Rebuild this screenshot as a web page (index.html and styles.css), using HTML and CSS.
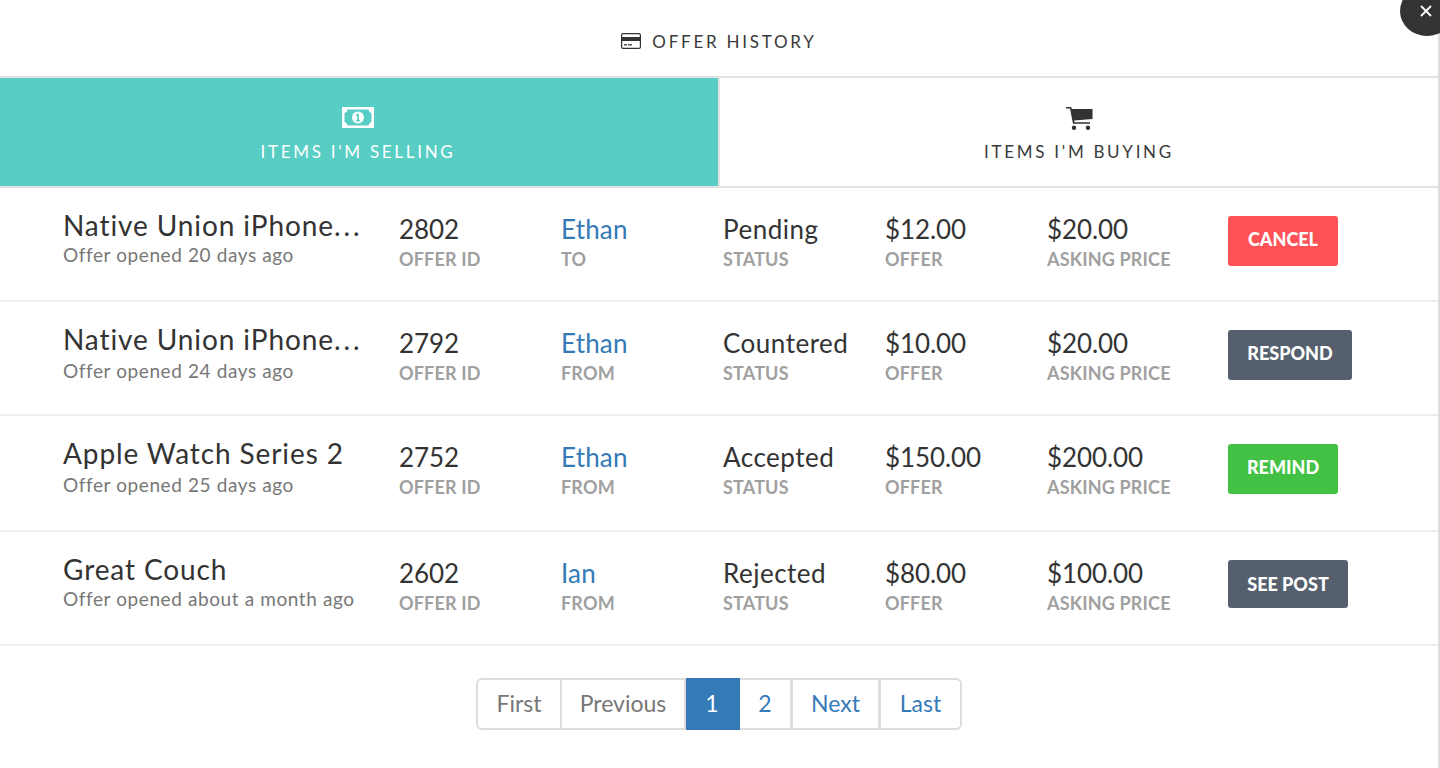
FILE: index.html
```html
<!DOCTYPE html>
<html lang="en">
<head>
<meta charset="utf-8">
<title>Offer History</title>
<link rel="stylesheet" href="styles.css">
</head>
<body>
<div class="modal">
  <header class="modal-head">
    <svg class="card-icon" viewBox="0 0 20 16" width="20" height="16"><rect x="0.6" y="0.6" width="18.800" height="14.800" rx="1.500" fill="none" stroke="#333" stroke-width="1.200"/><rect x="1" y="4" width="18" height="4" fill="#333"/><rect x="3" y="11" width="3" height="1.500" fill="#555"/><rect x="7" y="11" width="4" height="1.500" fill="#555"/></svg>
    <span>OFFER HISTORY</span>
  </header>
  <nav class="tabs">
    <div class="tab active">
      <svg viewBox="0 0 32 21" width="32" height="25"><path fill="#fff" fill-rule="evenodd" d="M0 0h32v21H0zM2.500 6v9a4 4 0 0 1 3 3.500h21a4 4 0 0 1 3-3.500V6a4 4 0 0 1-3-3.500h-21a4 4 0 0 1-3 3.500z"/><circle cx="16" cy="10.500" r="6" fill="#fff"/><path fill="#57cdc4" d="M15.300 6.800h1.600v6.500h1.200v1.100h-4.200v-1.100h1.300V8.300l-1.200.6-.4-1z"/></svg>
      <span>ITEMS I'M SELLING</span>
    </div>
    <div class="tab">
      <svg viewBox="0 -2 27 25" width="27" height="25"><path fill="#333" d="M0 0h5.200l.6 2H26.500v10L8.300 13.500l.3 1.700H24v1.600H7L4 1.500H0z"/><circle cx="8" cy="20.800" r="2.200" fill="#333"/><circle cx="22" cy="20.800" r="2.200" fill="#333"/></svg>
      <span>ITEMS I'M BUYING</span>
    </div>
  </nav>

  <section class="row row-a">
    <div class="item"><div class="title">Native Union iPhone<span class="dots">...</span></div><div class="sub">Offer opened 20 days ago</div></div>
    <div class="cell"><div class="val">2802</div><div class="lbl">OFFER ID</div></div>
    <div class="cell"><div class="val link">Ethan</div><div class="lbl">TO</div></div>
    <div class="cell"><div class="val word">Pending</div><div class="lbl">STATUS</div></div>
    <div class="cell"><div class="val">$12.00</div><div class="lbl">OFFER</div></div>
    <div class="cell"><div class="val">$20.00</div><div class="lbl">ASKING PRICE</div></div>
    <div class="action"><a class="btn red w110">CANCEL</a></div>
  </section>
  <section class="row row-b">
    <div class="item"><div class="title">Native Union iPhone<span class="dots">...</span></div><div class="sub">Offer opened 24 days ago</div></div>
    <div class="cell"><div class="val">2792</div><div class="lbl">OFFER ID</div></div>
    <div class="cell"><div class="val link">Ethan</div><div class="lbl">FROM</div></div>
    <div class="cell"><div class="val word">Countered</div><div class="lbl">STATUS</div></div>
    <div class="cell"><div class="val">$10.00</div><div class="lbl">OFFER</div></div>
    <div class="cell"><div class="val">$20.00</div><div class="lbl">ASKING PRICE</div></div>
    <div class="action"><a class="btn slate w124">RESPOND</a></div>
  </section>
  <section class="row row-c">
    <div class="item"><div class="title">Apple Watch Series 2</div><div class="sub">Offer opened 25 days ago</div></div>
    <div class="cell"><div class="val">2752</div><div class="lbl">OFFER ID</div></div>
    <div class="cell"><div class="val link">Ethan</div><div class="lbl">FROM</div></div>
    <div class="cell"><div class="val word">Accepted</div><div class="lbl">STATUS</div></div>
    <div class="cell"><div class="val">$150.00</div><div class="lbl">OFFER</div></div>
    <div class="cell"><div class="val">$200.00</div><div class="lbl">ASKING PRICE</div></div>
    <div class="action"><a class="btn green w110">REMIND</a></div>
  </section>
  <section class="row row-d">
    <div class="item"><div class="title">Great Couch</div><div class="sub">Offer opened about a month ago</div></div>
    <div class="cell"><div class="val">2602</div><div class="lbl">OFFER ID</div></div>
    <div class="cell"><div class="val link">Ian</div><div class="lbl">FROM</div></div>
    <div class="cell"><div class="val word">Rejected</div><div class="lbl">STATUS</div></div>
    <div class="cell"><div class="val">$80.00</div><div class="lbl">OFFER</div></div>
    <div class="cell"><div class="val">$100.00</div><div class="lbl">ASKING PRICE</div></div>
    <div class="action"><a class="btn slate w120 short">SEE POST</a></div>
  </section>

  <div class="pager-wrap">
    <ul class="pager">
      <li class="muted p-first">First</li>
      <li class="muted p-prev">Previous</li>
      <li class="current p-1">1</li>
      <li class="p-2">2</li>
      <li class="p-next">Next</li>
      <li class="p-last">Last</li>
    </ul>
  </div>
</div>
<button class="close" aria-label="Close"><svg viewBox="0 0 12 12" width="12" height="12"><path d="M1 1l10 10M11 1L1 11" stroke="#fff" stroke-width="1.800" fill="none"/></svg></button>
</body>
</html>
```
FILE: styles.css
```css
* { box-sizing: border-box; }
html, body { margin: 0; padding: 0; height: 768px; overflow: hidden; background: #fff; }
body { font-family: Lato, "Open Sans", sans-serif; color: #333; position: relative; }

.modal { width: 1440px; height: 768px; border-right: 2px solid #ddd; background: #fff; }

.modal-head { height: 78px; border-bottom: 2px solid #e3e3e3; display: flex; align-items: center; justify-content: center; gap: 11px; padding-top: 6px; font-size: 17px; letter-spacing: 2.75px; color: #3a3a3a; }
.card-icon { display: block; }

.tabs { display: flex; height: 110px; border-bottom: 2px solid #e3e3e3; }
.tab { flex: 0 0 718px; display: flex; flex-direction: column; align-items: center; padding-top: 27px; font-size: 17px; letter-spacing: 2.7px; color: #3a3a3a; }
.tab + .tab { flex: 1 1 auto; border-left: 2px solid #e3e3e3; }
.tab svg { display: block; height: 25px; margin-bottom: 11px; }
.tab.active { background: #57cdc4; color: #fff; padding-right: 2px; }

.row { display: grid; grid-template-columns: 336px 162px 162px 162px 162px 181px auto; padding: 22px 0 0 63px; border-bottom: 2px solid #eee; }
.row-a, .row-b, .row-d { height: 114px; }
.row-c { height: 116px; }

.title { font-size: 28px; line-height: 34px; margin-top: -2px; color: #333; white-space: nowrap; letter-spacing: 0.9px; }
.dots { letter-spacing: 3px; }
.sub { font-size: 19px; line-height: 24px; margin-top: 1px; color: #777; letter-spacing: 0.6px; }
.row-b .sub, .row-c .sub { margin-top: 3px; }
.val { font-size: 26px; line-height: 32px; margin-top: 3px; color: #333; white-space: nowrap; letter-spacing: -0.1px; }
.val.word { letter-spacing: 0.5px; }
.val.link { color: #337ab7; letter-spacing: 0.2px; }
.lbl { font-size: 18px; line-height: 24px; margin-top: 2px; font-weight: 700; color: #a0a0a0; white-space: nowrap; letter-spacing: 0.17px; }

.action { margin-top: 6px; }
.btn { display: flex; align-items: center; justify-content: center; height: 50px; border-radius: 3px; color: #fff; font-weight: 900; font-size: 18px; padding-bottom: 5px; }
.w110 { width: 110px; }
.w124 { width: 124px; }
.w120 { width: 120px; }
.short { height: 48px; padding-bottom: 1px; }
.red { background: #ff5257; }
.slate { background: #555f6e; }
.green { background: #43c145; }

.pager-wrap { display: flex; justify-content: center; padding-top: 32px; }
.pager { list-style: none; margin: 0; padding: 0; display: flex; height: 52px; }
.pager li { display: flex; align-items: center; justify-content: center; font-size: 23px; padding-bottom: 2px; color: #337ab7; border: 2px solid #ddd; border-left-width: 0; background: #fff; }
.pager .muted { color: #777; }
.pager .current { background: #337ab7; border-color: #337ab7; color: #fff; }
.p-first { width: 86px; border-left-width: 2px !important; border-radius: 6px 0 0 6px; }
.p-prev { width: 124px; }
.p-1 { width: 54px; }
.p-2 { width: 53px; border-right-width: 3px !important; }
.p-next { width: 88px; border-right-width: 3px !important; }
.p-last { width: 81px; border-radius: 0 6px 6px 0; }

.close { position: absolute; top: -14px; right: -14px; width: 54px; height: 50px; border: 0; padding: 0 2px 0 0; border-radius: 50%; background: #333; display: flex; align-items: center; justify-content: center; }
.close svg { display: block; }
```
